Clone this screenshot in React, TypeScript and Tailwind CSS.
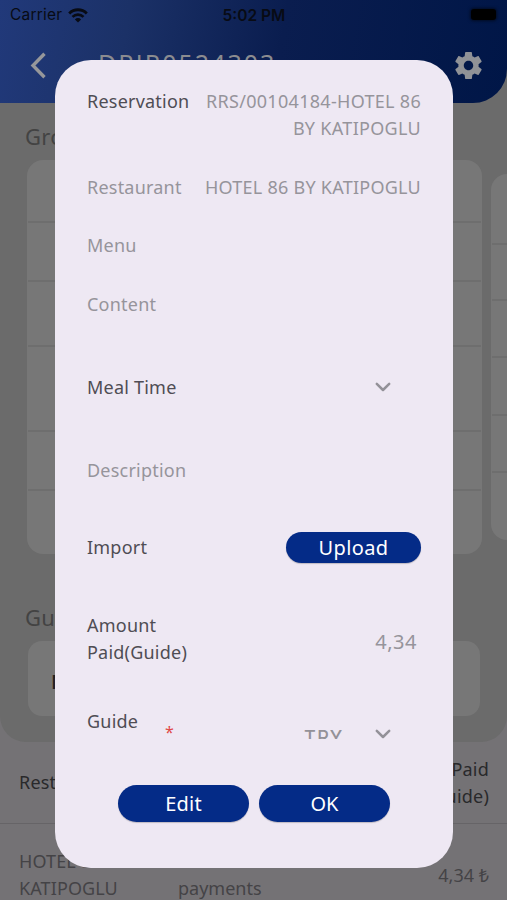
import type { ReactNode } from "react";

function Chevron({ className = "" }: { className?: string }) {
  return (
    <svg width="16" height="10" viewBox="0 0 16 10" className={className} fill="none">
      <path d="M1.8 1.8 L8 8 L14.2 1.8" stroke="#939198" strokeWidth="2.5" strokeLinecap="round" strokeLinejoin="round" />
    </svg>
  );
}

function Wifi() {
  return (
    <svg width="20" height="15" viewBox="0 0 20 15" fill="none" stroke="#080b14">
      <path d="M1.2 5.4 A12.4 12.4 0 0 1 18.8 5.4" strokeWidth="2.8" />
      <path d="M4.5 8.9 A7.8 7.8 0 0 1 15.5 8.9" strokeWidth="2.6" />
      <path d="M10 14.6 L6.9 11.4 A4.4 4.4 0 0 1 13.1 11.4 Z" fill="#080b14" stroke="none" />
    </svg>
  );
}

function Header() {
  return (
    <header className="h-[103px] rounded-br-[34px] bg-[linear-gradient(100deg,#21397a_0%,#1b3167_25%,#0a1d4f_55%,#001647_100%)]">
      <div className="grid h-[30px] grid-cols-3 items-center pl-[10px] pr-[11px] font-['Inter'] text-[#080b14]">
        <div className="flex items-center gap-[6px] text-[15.5px] tracking-[0.2px]">
          <span>Carrier</span>
          <Wifi />
        </div>
        <div className="whitespace-nowrap pl-[2px] pt-px text-center text-[15.5px] font-semibold tracking-[0px]">5:02 PM</div>
        <div className="flex justify-end">
          <span className="mt-[-2px] h-[11px] w-[25px] rounded-[3px] bg-black shadow-[0_0_3px_1px_#0008]" />
        </div>
      </div>
      <div className="flex items-center pl-[30px] pr-[25px] pt-[7px]">
        <svg width="17" height="27" viewBox="0 0 17 27" fill="none">
          <path d="M14.5 1.8 L3 13.5 L14.5 25.2" stroke="#96979a" strokeWidth="3.4" />
        </svg>
        <div className="ml-[51px] h-[57px] flex-1 pt-[10px] text-[25px] leading-[33px] tracking-[2px] text-[#8b8c90]">DRJR0524303</div>
        <svg width="27" height="27" viewBox="2 2 20 20" className="mt-[15px] self-start" fill="#909297">
          <path d="M19.43 12.98c.04-.32.07-.64.07-.98s-.03-.66-.07-.98l2.11-1.65c.19-.15.24-.42.12-.64l-2-3.46c-.12-.22-.39-.3-.61-.22l-2.49 1c-.52-.4-1.08-.73-1.69-.98l-.38-2.65A.488.488 0 0 0 14 2h-4c-.25 0-.46.18-.49.42l-.38 2.65c-.61.25-1.17.59-1.69.98l-2.49-1c-.23-.09-.49 0-.61.22l-2 3.46c-.13.22-.07.49.12.64l2.11 1.65c-.04.32-.07.65-.07.98s.03.66.07.98l-2.11 1.65c-.19.15-.24.42-.12.64l2 3.46c.12.22.39.3.61.22l2.49-1c.52.4 1.08.73 1.69.98l.38 2.65c.03.24.24.42.49.42h4c.25 0 .46-.18.49-.42l.38-2.65c.61-.25 1.17-.59 1.69-.98l2.49 1c.23.09.49 0 .61-.22l2-3.46c.12-.22.07-.49-.12-.64l-2.11-1.65zM12 15.5c-1.93 0-3.5-1.57-3.5-3.5s1.57-3.5 3.5-3.5 3.5 1.57 3.5 3.5-1.57 3.5-3.5 3.5z" />
        </svg>
      </div>
    </header>
  );
}

const line = "border-b-2 border-[#6e6e6e]";

function Background() {
  return (
    <div className="h-[900px] overflow-hidden bg-[#747275]">
      <div className="h-[742px] rounded-b-[26px] bg-[#6b6b6b]">
        <Header />
        <h2 className="h-[57px] pl-[25px] pt-[17px] text-[22px] leading-[33px] tracking-[0.3px] text-[#434343]">Groups</h2>
        <div className="flex gap-[9px] overflow-hidden pl-[27px]">
          <div className="h-[394px] w-[455px] shrink-0 rounded-[16px] bg-[#777777] px-[1px]">
            <div className={`h-[63px] ${line}`} />
            <div className={`h-[59px] ${line}`} />
            <div className={`h-[65px] ${line}`} />
            <div className={`h-[85px] ${line}`} />
            <div className={`h-[59px] ${line}`} />
          </div>
          <div className="mt-[14px] h-[366px] w-[455px] shrink-0 rounded-[16px] bg-[#777777] pl-[1px]">
            <div className={`h-[71px] ${line}`} />
            <div className={`h-[56px] ${line}`} />
            <div className={`h-[57px] ${line}`} />
            <div className={`h-[58px] ${line}`} />
            <div className={`h-[57px] ${line}`} />
          </div>
        </div>
        <h2 className="h-[87px] pl-[25px] pt-[47px] text-[22px] leading-[33px] tracking-[0.3px] text-[#434343]">Guides</h2>
        <div className="ml-[28px] h-[75px] w-[452px] rounded-[14px] bg-[#777777] pl-[23px] pt-[26px] text-[20px] font-semibold leading-[30px] text-[#222]">M</div>
      </div>
      <div className="flex h-[82px] items-center justify-between border-b border-[#666467] pl-[19px] pr-[18px] text-[18px] leading-[27px] tracking-[0.2px] text-[#29292b]">
        <div>Restaurant</div>
        <div className="text-right">Amount Paid<br />(Guide)</div>
      </div>
      <div className="flex pl-[19px] pr-[18px] pt-[24px] text-[18px] leading-[27px] text-[#444346]">
        <div className="w-[159px] tracking-[0.1px]">HOTEL 86<br />KATIPOGLU</div>
        <div className="flex-1">Meal<br />payments</div>
        <div className="pt-[14px]">4,34 ₺</div>
      </div>
    </div>
  );
}

function Row({ label, children, className = "", muted = false }: { label: ReactNode; children?: ReactNode; className?: string; muted?: boolean }) {
  return (
    <div className={`flex shrink-0 items-center justify-between ${className}`}>
      <span className={muted ? "text-[#96949b]" : "text-[#4f4d54]"}>{label}</span>
      {children}
    </div>
  );
}

function Modal() {
  return (
    <section className="absolute left-[55px] top-[60px] flex h-[808px] w-[398px] flex-col rounded-[36px] bg-[#eee8f3] pl-[32px] pr-[32px] pt-[27px] text-[18px] leading-[27px] tracking-[0.22px]">
      <div className="flex h-[54px] justify-between pt-[1px]">
        <span className="text-[#4f4d54]">Reservation</span>
        <span className="whitespace-nowrap text-right tracking-[0.3px] text-[#96949b]">RRS/00104184-HOTEL 86<br />BY KATIPOGLU</span>
      </div>
      <Row label="Restaurant" muted className="mt-[17px] h-[58px]">
        <span className="tracking-[0.25px] text-[#96949b]">HOTEL 86 BY KATIPOGLU</span>
      </Row>
      <Row label="Menu" muted className="h-[59px]" />
      <Row label="Content" muted className="h-[58px]" />
      <Row label="Meal Time" className="h-[108px]">
        <Chevron className="mr-[30px]" />
      </Row>
      <Row label="Description" muted className="h-[58px]" />
      <Row label="Import" className="h-[97px]">
        <button className="h-[31px] w-[135px] rounded-full bg-[#042b87] text-[20px] leading-[31px] tracking-[0.4px] text-white shadow-[0_1px_1px_#0003]">Upload</button>
      </Row>
      <Row label={<>Amount<br />Paid(Guide)</>} className="h-[85px]">
        <span className="mr-[4px] pt-[5px] text-[20px] tracking-[0.5px] text-[#96949b]">4,34</span>
      </Row>
      <div className="flex h-[58px] shrink-0 overflow-hidden pt-[26px]">
        <span className="w-[78px] pt-px text-[#4f4d54]">Guide</span>
        <span className="w-[139px] pt-[12px] text-[16px] leading-[27px] text-[#e04848]">*</span>
        <span className="w-[71px] pt-[17px] font-['Inter'] text-[18px] font-medium leading-[27px] tracking-[1.4px] text-[#939198]">TRY</span>
        <Chevron className="mt-[22px]" />
      </div>
      <div className="mt-[46px] flex justify-center gap-[10px] text-[20px] leading-[37px] text-white">
        <button className="h-[37px] w-[131px] rounded-full bg-[#042b87] shadow-[0_1px_1px_#0003]">Edit</button>
        <button className="h-[37px] w-[131px] rounded-full bg-[#042b87] tracking-[0px] shadow-[0_1px_1px_#0003]">OK</button>
      </div>
    </section>
  );
}

export default function App() {
  return (
    <main className="relative h-[900px] w-[507px] overflow-hidden font-['Noto_Sans',sans-serif]">
      <Background />
      <Modal />
    </main>
  );
}
